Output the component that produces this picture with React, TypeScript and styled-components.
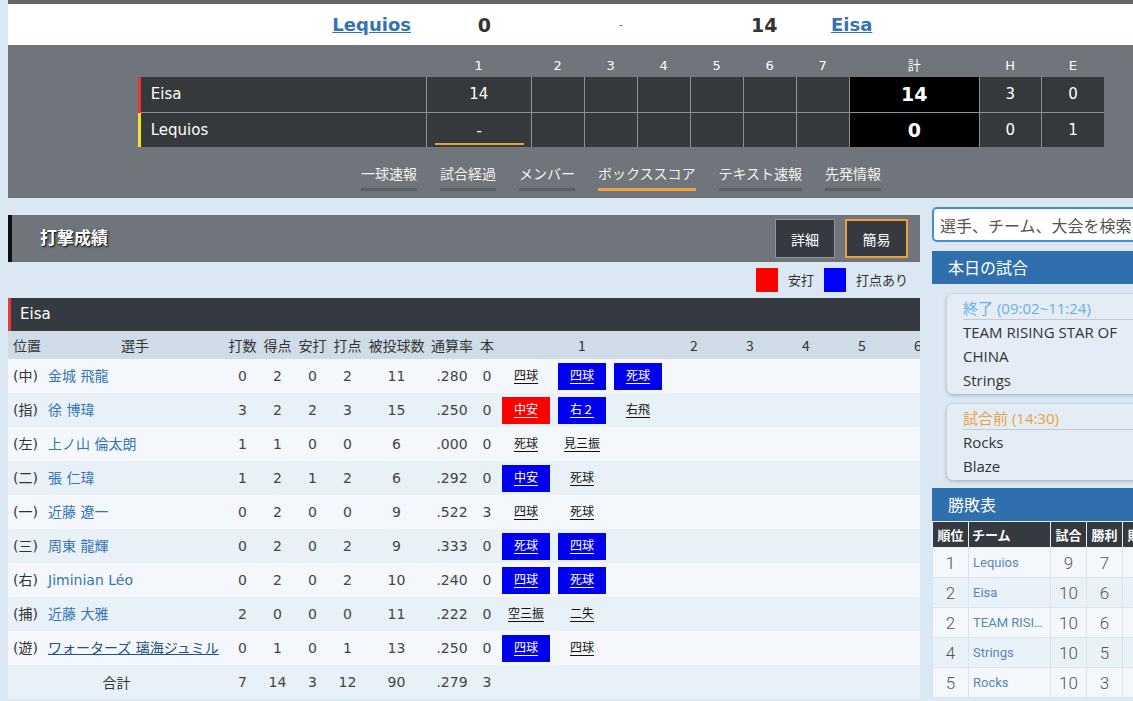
import React from 'react';
import styled, { createGlobalStyle } from 'styled-components';

const GlobalStyle = createGlobalStyle`
  html, body { margin: 0; padding: 0; overflow: hidden; background: #dbe8f4; }
  body { font-family: "DejaVu Sans", "Noto Sans CJK JP", sans-serif; color: #333; }
  *, *::before, *::after { box-sizing: border-box; }
`;

const JP = `"Noto Sans CJK JP", sans-serif`;
const LAT = `"DejaVu Sans", "Noto Sans CJK JP", sans-serif`;

const Page = styled.div`
  width: 1234px;
  padding-left: 8px;
`;

const TopRule = styled.div`
  height: 4px;
  background: #666;
`;

const ScoreStrip = styled.div`
  height: 41px;
  background: #fff;
  display: grid;
  grid-template-columns: 1fr 80px 260px 80px 1fr;
  align-items: center;
`;

const TeamLink = styled.a<{ $align: 'start' | 'end' }>`
  justify-self: ${(p) => p.$align};
  font: bold 18px/24px ${LAT};
  color: #3373b5;
  text-decoration: underline;
`;

const BigScore = styled.span<{ $align: 'start' | 'end' }>`
  justify-self: ${(p) => p.$align};
  font: bold 19px/24px ${LAT};
  color: #333;
`;

const Dash = styled.span`
  justify-self: center;
  font: 12px/24px ${LAT};
  color: #777;
`;

const ScoreSection = styled.section`
  background: #6f757b;
  padding: 10px 0 7px;
  display: flex;
  flex-direction: column;
  align-items: center;
`;

const LineScore = styled.table`
  width: 965px;
  border-collapse: collapse;
  table-layout: fixed;
  color: #fff;
`;

const LHead = styled.th`
  height: 22px;
  padding: 0;
  font: normal 13px/22px ${LAT};
  text-align: center;
  color: #fff;
`;

const LRow = styled.tr`
  &:first-of-type td {
    border-bottom: 1px solid #8b9095;
  }
`;

const LTeam = styled.td<{ $color: string }>`
  height: 35px;
  padding: 0 0 0 10px;
  background: #36393c;
  border-left: 3px solid ${(p) => p.$color};
  border-right: 1px solid #8b9095;
  font: 15px/20px ${LAT};
`;

const LInning = styled.td`
  height: 35px;
  padding: 0;
  background: #36393c;
  border-right: 1px solid #8b9095;
  text-align: center;
  font: 15px/20px ${LAT};
`;

const LTotal = styled(LInning)`
  background: #000;
  font: bold 19px/20px ${LAT};
`;

const LLast = styled(LInning)`
  border-right: none;
`;

const CurrentMark = styled.div`
  margin: 4px 7px 0 8px;
  line-height: 24px;
  border-bottom: 2px solid #e3a236;
`;

const Tabs = styled.nav`
  display: flex;
  gap: 23px;
  margin-top: 16px;
`;

const Tab = styled.a<{ $active?: boolean }>`
  color: #f3f3f3;
  font: 14px/20px ${JP};
  padding-bottom: 5px;
  border-bottom: 3px solid ${(p) => (p.$active ? '#eba13a' : '#5b6066')};
`;

const Main = styled.div`
  display: flex;
  gap: 12px;
  align-items: flex-start;
`;

const Content = styled.div`
  width: 912px;
  flex: none;
  padding-top: 17px;
`;

const Side = styled.aside`
  width: 250px;
  flex: none;
  padding-top: 9px;
`;

const SectionHead = styled.div`
  height: 47px;
  background: #6f757b;
  border-left: 4px solid #111;
  display: flex;
  align-items: center;
  justify-content: space-between;
  padding: 0 12px 0 28px;
`;

const SectionTitle = styled.h2`
  margin: 0 0 3px;
  color: #fff;
  font: bold 17px/20px ${JP};
  text-shadow: 1px 1px 2px #000;
`;

const ModeButtons = styled.div`
  display: flex;
  gap: 10px;
`;

const ModeButton = styled.button<{ $active?: boolean }>`
  height: 39px;
  width: ${(p) => (p.$active ? 63 : 60)}px;
  padding: 0;
  background: #343a40;
  color: #fff;
  font: 14px/20px ${JP};
  border: ${(p) => (p.$active ? '2px solid #e9a23b' : '1px solid #8f9499')};
`;

const Legend = styled.div`
  height: 36px;
  display: flex;
  align-items: center;
  justify-content: flex-end;
  gap: 10px;
  padding-right: 12px;
`;

const Swatch = styled.span<{ $color: string }>`
  width: 22px;
  height: 24px;
  background: ${(p) => p.$color};
`;

const LegendText = styled.span`
  font: 13px/20px ${JP};
  color: #333;
`;

const TotalLabel = styled.span`
  font: 14px/20px ${JP};
  color: #333;
`;

const TeamBar = styled.div`
  height: 33px;
  background: #343a40;
  border-left: 3px solid #e53b3b;
  color: #fff;
  font: 15px/33px ${LAT};
  padding-left: 9px;
`;

const TableWrap = styled.div`
  width: 912px;
  overflow-x: auto;
`;

const Stats = styled.table`
  width: 994px;
  border-collapse: collapse;
  table-layout: fixed;
`;

const Th = styled.th<{ $left?: boolean }>`
  height: 28px;
  padding: 0 0 0 ${(p) => (p.$left ? 5 : 0)}px;
  background: #cfdce8;
  color: #333;
  font: normal 14px/20px ${JP};
  text-align: ${(p) => (p.$left ? 'left' : 'center')};
  white-space: nowrap;
`;

const Tr = styled.tr`
  &:nth-child(odd) td {
    background: #f4f8fc;
  }
  &:nth-child(even) td {
    background: #e9f1f8;
  }
`;

const Td = styled.td`
  height: 34px;
  padding: 0;
  color: #444;
  font: 14px/20px ${LAT};
  text-align: center;
  white-space: nowrap;
`;

const PosTd = styled(Td)`
  text-align: left;
  padding-left: 5px;
  color: #333;
`;

const NameTd = styled(Td)`
  text-align: left;
  padding-left: 3px;
`;

const PlayerLink = styled.a<{ $visited?: boolean }>`
  color: ${(p) => (p.$visited ? '#23527c' : '#3774b0')};
  text-decoration: ${(p) => (p.$visited ? 'underline' : 'none')};
`;

const PlaysTd = styled(Td)`
  text-align: left;
`;

const Plays = styled.div`
  display: flex;
`;

const Play = styled.div<{ $bg?: string }>`
  width: 48px;
  height: 27px;
  margin: 0 4px;
  display: flex;
  align-items: center;
  justify-content: center;
  background: ${(p) => p.$bg || 'transparent'};
  color: ${(p) => (p.$bg ? '#fff' : '#111')};
`;

const PlayText = styled.span`
  font: 12px/14px ${JP};
  border-bottom: 1px solid currentColor;
  padding-bottom: 1px;
`;

const SearchBox = styled.input`
  display: block;
  width: 100%;
  height: 35px;
  border: 2px solid #3d8fdb;
  border-radius: 5px;
  padding: 0 6px;
  background: #fff;
  font: 16px/20px ${JP};
  outline: none;
  &::placeholder {
    color: #555;
  }
`;

const SideHead = styled.h3<{ $top: number }>`
  margin: ${(p) => p.$top}px 0 0;
  height: 33px;
  background: #2f6fae;
  color: #fff;
  font: normal 16px/33px ${JP};
  padding-left: 16px;
`;

const GameCard = styled.div`
  margin: 10px 15px 0;
  background: #e4edf6;
  border-radius: 6px;
  box-shadow: 0 1px 4px rgba(0, 0, 0, 0.28);
  padding: 3px 8px 2px 16px;
`;

const GameStatus = styled.div<{ $color: string }>`
  font: 15px/22px "Open Sans", "Noto Sans CJK JP", sans-serif;
  color: ${(p) => p.$color};
  border-bottom: 1px solid #c2c9d0;
`;

const GameTeam = styled.div`
  font: 15px/24px "Open Sans", sans-serif;
  color: #333;
`;

const Standings = styled.table`
  width: 302px;
  border-collapse: collapse;
  table-layout: fixed;
`;

const STh = styled.th`
  height: 26px;
  padding: 0 3px;
  background: #343a40;
  color: #fff;
  font: bold 13px/18px ${JP};
  border: 1px solid #e6edf3;
  text-align: center;
  white-space: nowrap;
  &:nth-child(2) {
    text-align: left;
  }
`;

const STr = styled.tr`
  &:nth-child(odd) td {
    background: #f4f8fc;
  }
  &:nth-child(even) td {
    background: #eaf2f9;
  }
`;

const STd = styled.td`
  height: 30px;
  padding: 0;
  border: 1px solid #d9e4ee;
  color: #555;
  font: 300 17px/20px Roboto, sans-serif;
  text-align: center;
`;

const STeam = styled(STd)`
  text-align: left;
  padding: 0 4px;
  font: 13px/20px Roboto, sans-serif;
  color: #5b86b3;
  overflow: hidden;
  text-overflow: ellipsis;
  white-space: nowrap;
`;

type PlayT = { t: string; c?: 'red' | 'blue' };
type Batter = {
  pos: string;
  name: string;
  s: (number | string)[];
  plays: PlayT[];
  visited?: boolean;
};

const batters: Batter[] = [
  { pos: '(中)', name: '金城 飛龍', s: [0, 2, 0, 2, 11, '.280', 0], plays: [{ t: '四球' }, { t: '四球', c: 'blue' }, { t: '死球', c: 'blue' }] },
  { pos: '(指)', name: '徐 博瑋', s: [3, 2, 2, 3, 15, '.250', 0], plays: [{ t: '中安', c: 'red' }, { t: '右２', c: 'blue' }, { t: '右飛' }] },
  { pos: '(左)', name: '上ノ山 倫太朗', s: [1, 1, 0, 0, 6, '.000', 0], plays: [{ t: '死球' }, { t: '見三振' }] },
  { pos: '(二)', name: '張 仁瑋', s: [1, 2, 1, 2, 6, '.292', 0], plays: [{ t: '中安', c: 'blue' }, { t: '死球' }] },
  { pos: '(一)', name: '近藤 遼一', s: [0, 2, 0, 0, 9, '.522', 3], plays: [{ t: '四球' }, { t: '死球' }] },
  { pos: '(三)', name: '周東 龍輝', s: [0, 2, 0, 2, 9, '.333', 0], plays: [{ t: '死球', c: 'blue' }, { t: '四球', c: 'blue' }] },
  { pos: '(右)', name: 'Jiminian Léo', s: [0, 2, 0, 2, 10, '.240', 0], plays: [{ t: '四球', c: 'blue' }, { t: '死球', c: 'blue' }] },
  { pos: '(捕)', name: '近藤 大雅', s: [2, 0, 0, 0, 11, '.222', 0], plays: [{ t: '空三振' }, { t: '二失' }] },
  { pos: '(遊)', name: 'ワォーターズ 璃海ジュミル', s: [0, 1, 0, 1, 13, '.250', 0], plays: [{ t: '四球', c: 'blue' }, { t: '四球' }], visited: true },
];

const totals: (number | string)[] = [7, 14, 3, 12, 90, '.279', 3];

const playColor = { red: '#ff0000', blue: '#0000ee' };

const standings = [
  { r: 1, team: 'Lequios', g: 9, w: 7, l: 2, d: 0, p: '.778' },
  { r: 2, team: 'Eisa', g: 10, w: 6, l: 4, d: 0, p: '.600' },
  { r: 2, team: 'TEAM RISING STAR OF CHINA', g: 10, w: 6, l: 4, d: 0, p: '.600' },
  { r: 4, team: 'Strings', g: 10, w: 5, l: 5, d: 0, p: '.500' },
  { r: 5, team: 'Rocks', g: 10, w: 3, l: 7, d: 0, p: '.300' },
];

const tabs = ['一球速報', '試合経過', 'メンバー', 'ボックススコア', 'テキスト速報', '先発情報'];

export default function App() {
  return (
    <Page>
      <GlobalStyle />
      <TopRule />
      <ScoreStrip>
        <TeamLink $align="end" href="#">Lequios</TeamLink>
        <BigScore $align="end">0</BigScore>
        <Dash>-</Dash>
        <BigScore $align="start">14</BigScore>
        <TeamLink $align="start" href="#">Eisa</TeamLink>
      </ScoreStrip>

      <ScoreSection>
        <LineScore>
          <colgroup>
            <col style={{ width: 287 }} />
            <col style={{ width: 105 }} />
            {[2, 3, 4, 5, 6, 7].map((i) => (
              <col key={i} style={{ width: 53 }} />
            ))}
            <col style={{ width: 130 }} />
            <col style={{ width: 62 }} />
            <col style={{ width: 63 }} />
          </colgroup>
          <thead>
            <tr>
              <LHead />
              {[1, 2, 3, 4, 5, 6, 7].map((i) => (
                <LHead key={i}>{i}</LHead>
              ))}
              <LHead>計</LHead>
              <LHead>H</LHead>
              <LHead>E</LHead>
            </tr>
          </thead>
          <tbody>
            <LRow>
              <LTeam $color="#e53935">Eisa</LTeam>
              <LInning>14</LInning>
              {[2, 3, 4, 5, 6, 7].map((i) => (
                <LInning key={i} />
              ))}
              <LTotal>14</LTotal>
              <LInning>3</LInning>
              <LLast>0</LLast>
            </LRow>
            <LRow>
              <LTeam $color="#f2e51d">Lequios</LTeam>
              <LInning>
                <CurrentMark>-</CurrentMark>
              </LInning>
              {[2, 3, 4, 5, 6, 7].map((i) => (
                <LInning key={i} />
              ))}
              <LTotal>0</LTotal>
              <LInning>0</LInning>
              <LLast>1</LLast>
            </LRow>
          </tbody>
        </LineScore>
        <Tabs>
          {tabs.map((t) => (
            <Tab key={t} $active={t === 'ボックススコア'}>
              {t}
            </Tab>
          ))}
        </Tabs>
      </ScoreSection>

      <Main>
        <Content>
          <SectionHead>
            <SectionTitle>打撃成績</SectionTitle>
            <ModeButtons>
              <ModeButton>詳細</ModeButton>
              <ModeButton $active>簡易</ModeButton>
            </ModeButtons>
          </SectionHead>
          <Legend>
            <Swatch $color="#ff0000" />
            <LegendText>安打</LegendText>
            <Swatch $color="#0000ff" />
            <LegendText>打点あり</LegendText>
          </Legend>
          <TeamBar>Eisa</TeamBar>
          <TableWrap>
            <Stats>
              <colgroup>
                <col style={{ width: 37 }} />
                <col style={{ width: 180 }} />
                <col style={{ width: 35 }} />
                <col style={{ width: 35 }} />
                <col style={{ width: 35 }} />
                <col style={{ width: 35 }} />
                <col style={{ width: 63 }} />
                <col style={{ width: 48 }} />
                <col style={{ width: 22 }} />
                <col style={{ width: 168 }} />
                {[2, 3, 4, 5, 6, 7].map((i) => (
                  <col key={i} style={{ width: 56 }} />
                ))}
              </colgroup>
              <thead>
                <tr>
                  <Th $left>位置</Th>
                  <Th>選手</Th>
                  <Th>打数</Th>
                  <Th>得点</Th>
                  <Th>安打</Th>
                  <Th>打点</Th>
                  <Th>被投球数</Th>
                  <Th>通算率</Th>
                  <Th>本</Th>
                  {[1, 2, 3, 4, 5, 6, 7].map((i) => (
                    <Th key={i}>{i}</Th>
                  ))}
                </tr>
              </thead>
              <tbody>
                {batters.map((b) => (
                  <Tr key={b.name}>
                    <PosTd>{b.pos}</PosTd>
                    <NameTd>
                      <PlayerLink href="#" $visited={b.visited}>
                        {b.name}
                      </PlayerLink>
                    </NameTd>
                    {b.s.map((v, i) => (
                      <Td key={i}>{v}</Td>
                    ))}
                    <PlaysTd>
                      <Plays>
                        {b.plays.map((p, i) => (
                          <Play key={i} $bg={p.c ? playColor[p.c] : undefined}>
                            <PlayText>{p.t}</PlayText>
                          </Play>
                        ))}
                      </Plays>
                    </PlaysTd>
                    {[2, 3, 4, 5, 6, 7].map((i) => (
                      <Td key={i} />
                    ))}
                  </Tr>
                ))}
                <Tr>
                  <Td colSpan={2}>
                    <TotalLabel>合計</TotalLabel>
                  </Td>
                  {totals.map((v, i) => (
                    <Td key={i}>{v}</Td>
                  ))}
                  {[1, 2, 3, 4, 5, 6, 7].map((i) => (
                    <Td key={i} />
                  ))}
                </Tr>
              </tbody>
            </Stats>
          </TableWrap>
        </Content>

        <Side>
          <SearchBox placeholder="選手、チーム、大会を検索" />
          <SideHead $top={9}>本日の試合</SideHead>
          <GameCard>
            <GameStatus $color="#6aaee6">終了 (09:02~11:24)</GameStatus>
            <GameTeam>TEAM RISING STAR OF CHINA</GameTeam>
            <GameTeam>Strings</GameTeam>
          </GameCard>
          <GameCard>
            <GameStatus $color="#eea040">試合前 (14:30)</GameStatus>
            <GameTeam>Rocks</GameTeam>
            <GameTeam>Blaze</GameTeam>
          </GameCard>
          <SideHead $top={8}>勝敗表</SideHead>
          <Standings>
            <colgroup>
              <col style={{ width: 36 }} />
              <col style={{ width: 82 }} />
              <col style={{ width: 36 }} />
              <col style={{ width: 36 }} />
              <col style={{ width: 36 }} />
              <col style={{ width: 36 }} />
              <col style={{ width: 40 }} />
            </colgroup>
            <thead>
              <tr>
                <STh>順位</STh>
                <STh>チーム</STh>
                <STh>試合</STh>
                <STh>勝利</STh>
                <STh>敗戦</STh>
                <STh>引分</STh>
                <STh>勝率</STh>
              </tr>
            </thead>
            <tbody>
              {standings.map((s) => (
                <STr key={s.team}>
                  <STd>{s.r}</STd>
                  <STeam>{s.team}</STeam>
                  <STd>{s.g}</STd>
                  <STd>{s.w}</STd>
                  <STd>{s.l}</STd>
                  <STd>{s.d}</STd>
                  <STd>{s.p}</STd>
                </STr>
              ))}
            </tbody>
          </Standings>
        </Side>
      </Main>
    </Page>
  );
}
